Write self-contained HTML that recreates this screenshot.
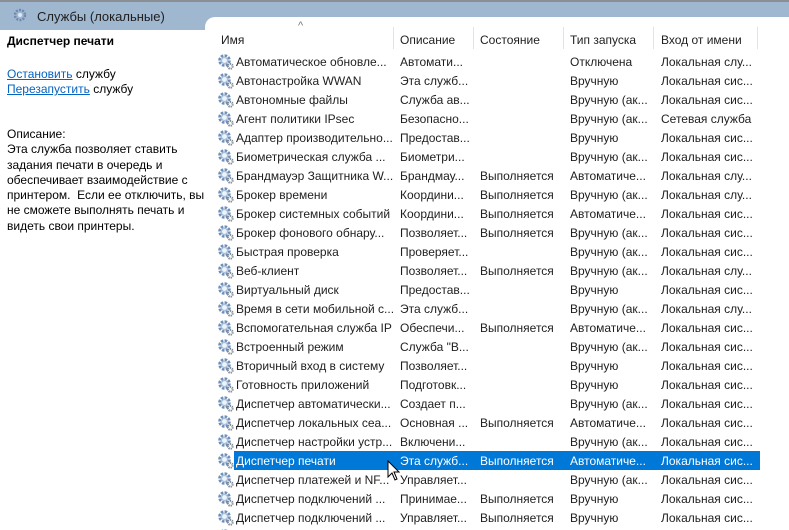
<!DOCTYPE html>
<html><head><meta charset="utf-8"><style>
*{margin:0;padding:0;box-sizing:border-box}
html,body{width:789px;height:530px;overflow:hidden}
body{background:#fff;font-family:"Liberation Sans",sans-serif;font-size:12px;color:#000;position:relative}
.bar{position:absolute;left:0;top:0;width:789px;height:30px;background:#a0b7d0;border-top:2px solid #8a8f96}
.bar span{position:absolute;left:37px;top:7px;font-size:13px;color:#1e1e1e}
.right{position:absolute;left:205px;top:17px;width:584px;height:513px;background:#fff;border-top-left-radius:10px}
.left{position:absolute;left:0;top:30px;width:205px;height:500px;background:#fff}
.t{position:absolute;white-space:nowrap}
a{color:#0563c1;text-decoration:underline}
.hdr{position:absolute;top:33px;font-size:12px;color:#1e1e1e}
.sep{position:absolute;top:27px;width:1px;height:22px;background:#e3e3e3}
.row{position:absolute;left:0;width:789px;height:19px}
.row div{position:absolute;top:3px;white-space:nowrap;color:#1e1e1e}
.sel{position:absolute;left:234px;width:526px;height:19px;background:#0078d7}
.row.s div{color:#fff}
svg{position:absolute}
#rows{position:absolute;left:0;top:0;width:789px;height:530px;overflow:hidden}
</style></head><body>
<div class="bar"><svg style="left:12px;top:5px" width="16" height="16" viewBox="0 0 16 16"><circle cx="8" cy="8" r="5" fill="none" stroke="#6d89b0" stroke-width="2.5" stroke-dasharray="2 1.2"/><circle cx="8" cy="8" r="2" fill="#dfe8f2"/></svg><span>Службы (локальные)</span></div>
<div class="right"></div>
<div class="left"></div>
<div class="t" style="left:7px;top:34px;font-weight:bold">Диспетчер печати</div>
<div class="t" style="left:7px;top:67px"><a>Остановить</a> службу</div>
<div class="t" style="left:7px;top:82px"><a>Перезапустить</a> службу</div>
<div class="t" style="left:7px;top:127px;line-height:15.3px">Описание:<br>Эта служба позволяет ставить<br>задания печати в очередь и<br>обеспечивает взаимодействие с<br>принтером.&nbsp; Если ее отключить, вы<br>не сможете выполнять печать и<br>видеть свои принтеры.</div>
<div class="t" style="left:298px;top:20px;color:#777;font-size:11px">^</div>
<div class="hdr" style="left:221px">Имя</div>
<div class="hdr" style="left:400px">Описание</div>
<div class="hdr" style="left:480px">Состояние</div>
<div class="hdr" style="left:570px">Тип запуска</div>
<div class="hdr" style="left:661px">Вход от имени</div>
<div class="sep" style="left:393px"></div><div class="sep" style="left:473px"></div><div class="sep" style="left:563px"></div><div class="sep" style="left:653px"></div><div class="sep" style="left:757px"></div>
<div id="rows"></div>
<script>
var d=[["Автоматическое обновле...","Автомати...","","Отключена","Локальная слу..."],
["Автонастройка WWAN","Эта служб...","","Вручную","Локальная сис..."],
["Автономные файлы","Служба ав...","","Вручную (ак...","Локальная сис..."],
["Агент политики IPsec","Безопасно...","","Вручную (ак...","Сетевая служба"],
["Адаптер производительно...","Предостав...","","Вручную","Локальная сис..."],
["Биометрическая служба ...","Биометри...","","Вручную (ак...","Локальная сис..."],
["Брандмауэр Защитника W...","Брандмау...","Выполняется","Автоматиче...","Локальная слу..."],
["Брокер времени","Координи...","Выполняется","Вручную (ак...","Локальная слу..."],
["Брокер системных событий","Координи...","Выполняется","Автоматиче...","Локальная сис..."],
["Брокер фонового обнару...","Позволяет...","Выполняется","Вручную (ак...","Локальная сис..."],
["Быстрая проверка","Проверяет...","","Вручную (ак...","Локальная сис..."],
["Веб-клиент","Позволяет...","Выполняется","Вручную (ак...","Локальная слу..."],
["Виртуальный диск","Предостав...","","Вручную","Локальная сис..."],
["Время в сети мобильной с...","Эта служб...","","Вручную (ак...","Локальная слу..."],
["Вспомогательная служба IP","Обеспечи...","Выполняется","Автоматиче...","Локальная сис..."],
["Встроенный режим","Служба \"В...","","Вручную (ак...","Локальная сис..."],
["Вторичный вход в систему","Позволяет...","","Вручную","Локальная сис..."],
["Готовность приложений","Подготовк...","","Вручную","Локальная сис..."],
["Диспетчер автоматически...","Создает п...","","Вручную (ак...","Локальная сис..."],
["Диспетчер локальных сеа...","Основная ...","Выполняется","Автоматиче...","Локальная сис..."],
["Диспетчер настройки устр...","Включени...","","Вручную (ак...","Локальная сис..."],
["Диспетчер печати","Эта служб...","Выполняется","Автоматиче...","Локальная сис..."],
["Диспетчер платежей и NF...","Управляет...","","Вручную (ак...","Локальная сис..."],
["Диспетчер подключений ...","Принимае...","Выполняется","Вручную","Локальная сис..."],
["Диспетчер подключений ...","Управляет...","Выполняется","Вручную","Локальная сис..."],
["","","","",""]];
var xs=[236,400,480,570,661],h="";
var g='<svg style="left:217px;top:1px" width="18" height="18" viewBox="0 0 18 18"><circle cx="7.5" cy="7.5" r="4.6" fill="none" stroke="#6f8fb8" stroke-width="3.4" stroke-dasharray="2.4 1.2"/><circle cx="7.5" cy="7.5" r="3" fill="none" stroke="#a9c1dc" stroke-width="1.4"/><circle cx="7.5" cy="7.5" r="1.6" fill="#eef3f8"/><circle cx="13.3" cy="13.3" r="2.4" fill="none" stroke="#7d8894" stroke-width="2" stroke-dasharray="1.3 0.8"/></svg>';
d.forEach(function(r,i){var y=52+19*i;var s=i==21;
h+=(s?'<div class="sel" style="top:'+y+'px"></div>':'')+'<div class="row'+(s?' s':'')+'" style="top:'+y+'px">'+g;
r.forEach(function(c,j){h+='<div style="left:'+xs[j]+'px">'+c+'</div>'});h+='</div>';});
document.getElementById('rows').innerHTML=h;
</script>
<svg style="left:387px;top:460px" width="14" height="22" viewBox="0 0 14 22"><path d="M1 1 L1 17 L5 13 L8 20 L10 19 L7 12 L12 12 Z" fill="#fff" stroke="#000" stroke-width="1"/></svg>
</body></html>
